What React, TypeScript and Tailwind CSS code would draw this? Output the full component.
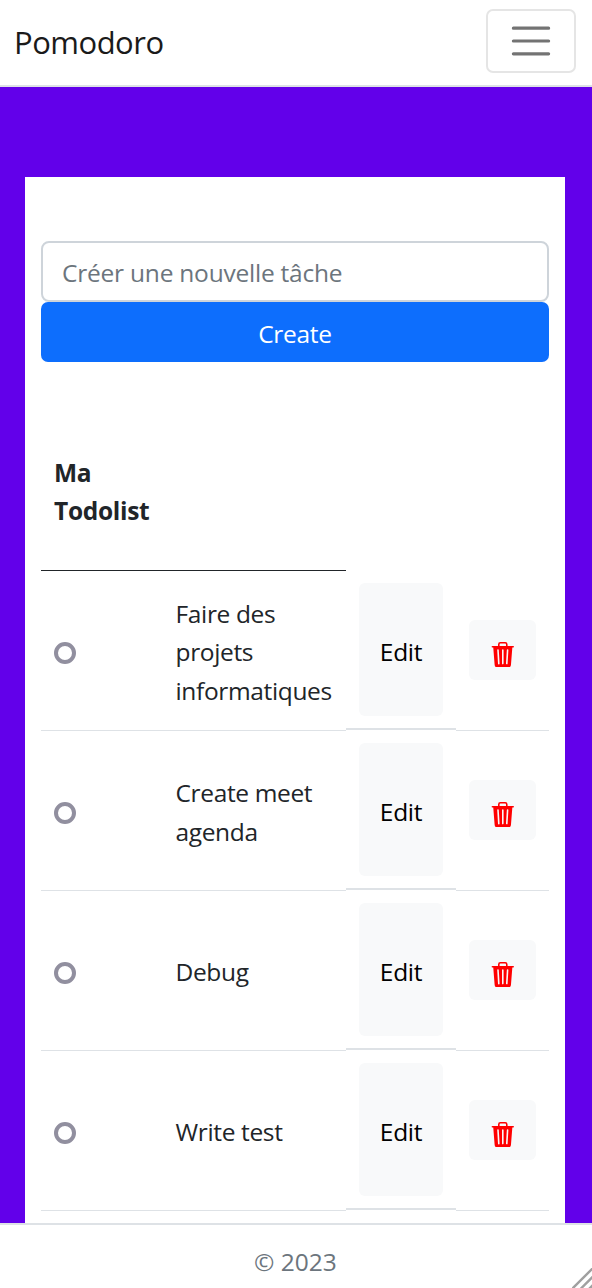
import { BsTrash3Fill } from "react-icons/bs";

const tasks = [
  { id: 1, lines: ["Faire des", "projets", "informatiques"] },
  { id: 2, lines: ["Create meet", "agenda"] },
  { id: 3, lines: ["Debug"] },
  { id: 4, lines: ["Write test"] },
];

function Navbar() {
  return (
    <header className="flex h-[87px] shrink-0 items-start justify-between border-b-2 border-[#dee2e6] bg-white pt-[9px] pr-4 pl-[14px]">
      <span className="pt-[9px] text-[31px] leading-[48px] tracking-[-0.5px] text-[#1a1a1a]">Pomodoro</span>
      <button
        aria-label="Menu"
        className="flex h-16 w-[90px] items-center justify-center rounded-[7px] border-2 border-[#e5e5e5]"
      >
        <svg width="48" height="48" viewBox="0 0 30 30" fill="none" stroke="rgba(0,0,0,0.55)" strokeWidth="2" strokeLinecap="round" strokeMiterlimit="10">
          <path d="M4 7h22M4 15h22M4 23h22" />
        </svg>
      </button>
    </header>
  );
}

function TaskRow({ lines }: { lines: string[] }) {
  return (
    <li className="grid h-40 grid-cols-[122px_183px_110px_93px]">
      <div className="flex items-center border-b border-[#dee2e6] pt-[5px] pl-[13px]">
        <span className="size-[22px] rounded-full border-4 border-[#918f9f]" />
      </div>
      <div className="flex flex-col justify-center border-b border-[#dee2e6] pt-1 pl-[12.5px] tracking-[-0.35px]">
        {lines.map((line) => (
          <span key={line} className="whitespace-nowrap leading-[38.4px]">{line}</span>
        ))}
      </div>
      <div className="h-[159px] border-b-2 border-[#dee2e6] px-[13px] pt-3">
        <button className="h-[133px] w-full rounded-md bg-[#f8f9fa] pt-1.5 text-black">Edit</button>
      </div>
      <div className="flex items-start border-b border-[#dee2e6] pt-[49px] pl-[13px]">
        <button aria-label="Supprimer" className="flex h-[60.4px] w-[67px] items-center justify-center rounded-md bg-[#f8f9fa] pt-[9px] text-[#ff0000]">
          <BsTrash3Fill size={25.6} />
        </button>
      </div>
    </li>
  );
}

export default function App() {
  return (
    <div className="flex h-[1288px] w-[592px] flex-col overflow-hidden bg-white font-['Open_Sans',sans-serif] text-[24.5px] tracking-[-0.3px] text-[#212529]">
      <Navbar />
      <main className="flex h-[1136px] shrink-0 flex-col overflow-hidden bg-[#6200ea] pr-[27px] pl-[25px] pt-[90px]">
        <section className="flex grow flex-col bg-white px-4 pt-16">
          <input
            placeholder="Créer une nouvelle tâche"
            className="h-[61px] w-full rounded-[8px] border-2 border-[#ced4da] bg-white px-[19px] pt-0.5 tracking-[-0.22px] placeholder:text-[#6c757d]"
          />
          <button className="h-[60px] w-full rounded-[7px] bg-[#0d6efd] pt-1 text-white">Create</button>
          <div className="mt-[92px] flex h-[117px] w-[305px] flex-col border-b border-[#212529] pl-[13px] font-bold leading-[38.4px]">
            <span>Ma</span>
            <span>Todolist</span>
          </div>
          <ul>
            {tasks.map((task) => (
              <TaskRow key={task.id} lines={task.lines} />
            ))}
          </ul>
        </section>
      </main>
      <footer className="relative flex grow justify-center border-t-2 border-[#dee2e6] bg-white pt-[18px] pr-[1px] leading-[38.4px] tracking-[0px] text-[#6c757d]">
        <span>© 2023</span>
        <svg className="absolute right-0 bottom-0" width="20" height="20" viewBox="0 0 20 20" stroke="#a0a0a0" strokeWidth="2.4">
          <path d="M0 21L21 0M8.5 21L21 8.5M17 21L21 17" />
        </svg>
      </footer>
    </div>
  );
}
